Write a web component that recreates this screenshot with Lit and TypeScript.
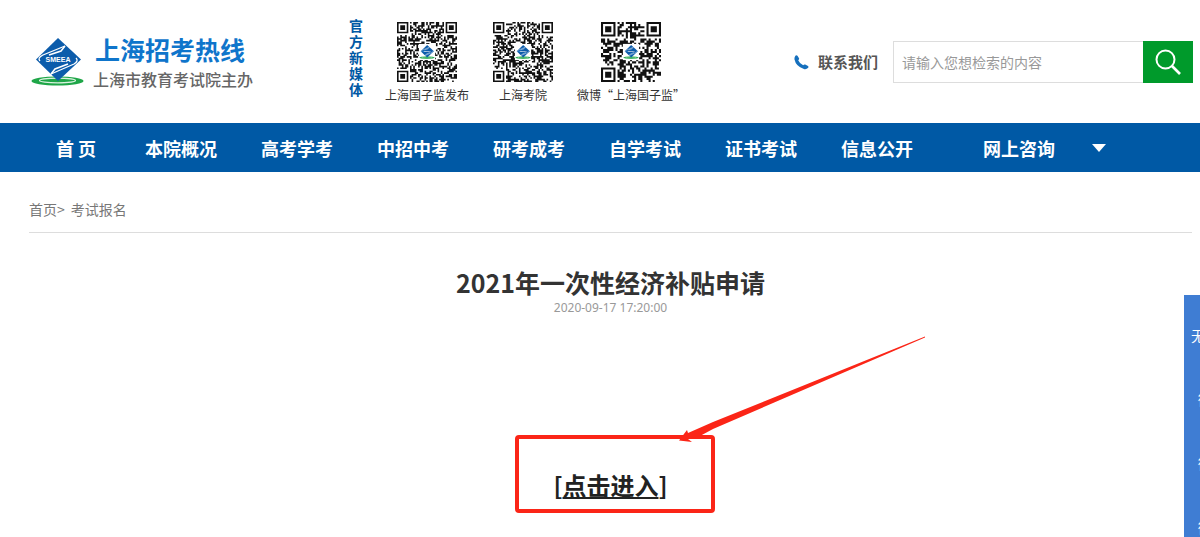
import { LitElement, html, svg, css } from "lit";
import { customElement, property } from "lit/decorators.js";

const emblem = svg`
  <ellipse cx="27.500" cy="43" rx="26" ry="4.500" fill="#1fa648"/>
  <ellipse cx="27.500" cy="42.500" rx="18" ry="2.400" fill="none" stroke="#d9f2de" stroke-width="1.200"/>
  <path d="M28 0 51 21.500 28 43 6 21.500Z" fill="#0c5cab"/>
  <path d="M35 8 13 17q-6 3-3 6M21 36 44 26q5-3 2-6" fill="none" stroke="#fff" stroke-width="1.300"/>
  <path d="M35 8 31 13 19 17M21 36 25 31 38 26" fill="none" stroke="#fff" stroke-width="1.500"/>
  <text x="28" y="24" text-anchor="middle" font-family="Liberation Sans" font-size="7" font-weight="bold" fill="#fff">SMEEA</text>`;

@customElement("qr-card")
class QrCard extends LitElement {
  @property({ type: Number }) modules = 37;
  @property({ type: Number }) seed = 1;
  @property() label = "";

  static styles = css`
    :host { display: flex; flex-direction: column; align-items: center; color: #333;
      font: 12px/18px "Noto Sans CJK SC", sans-serif; white-space: nowrap; }
    .code { width: 60px; height: 60px; margin-bottom: 4px; }
  `;

  private dark(x: number, y: number) {
    let h = Math.imul(x + 1, 374761393) ^ Math.imul(y + 1, 668265263) ^ Math.imul(this.seed, 974634777);
    h = Math.imul(h ^ (h >>> 13), 1274126177);
    h = Math.imul(h ^ (h >>> 15), 2246822519);
    return ((h ^ (h >>> 16)) >>> 0) % 100 < 54;
  }

  private cells() {
    const n = this.modules;
    let d = "";
    const corner = (x: number, y: number) =>
      (x < 8 && y < 8) || (x >= n - 8 && y < 8) || (x < 8 && y >= n - 8);
    for (let y = 0; y < n; y++) {
      for (let x = 0; x < n; x++) {
        if (!corner(x, y) && this.dark(x, y)) d += `M${x} ${y}h1v1h-1z`;
      }
    }
    for (const [x, y] of [[0, 0], [n - 7, 0], [0, n - 7]]) {
      d += `M${x} ${y}h7v7h-7zM${x + 1} ${y + 1}v5h5v-5zM${x + 2} ${y + 2}h3v3h-3z`;
    }
    return d;
  }

  render() {
    const n = this.modules;
    const m = n * 0.27;
    const o = (n - m) / 2;
    return html`
      <svg class="code" viewBox="0 0 ${n} ${n}" role="img" aria-label=${this.label}>
        <path d=${this.cells()} fill="#111"/>
        <rect x=${o} y=${o} width=${m} height=${m} fill="#fff"/>
        <svg x=${o} y=${o} width=${m} height=${m} viewBox="0 0 55 48">${emblem}</svg>
      </svg>
      <span>${this.label}</span>`;
  }
}

@customElement("app-root")
class AppRoot extends LitElement {
  static styles = css`
    :host { display: block; position: relative; min-height: 100vh; overflow: hidden; background: #fff;
      font-family: "Noto Sans CJK SC", sans-serif; color: #333; }
    a { color: inherit; text-decoration: none; }
    .header { display: flex; height: 123px; box-sizing: border-box; padding: 0 7px 0 30px; }
    .brand { display: flex; align-items: flex-start; padding-top: 32px; width: 319px; box-sizing: border-box; }
    .emblem { width: 55px; height: 48px; margin: 6px 8px 0 0; flex: none; }
    .names { display: flex; flex-direction: column; white-space: nowrap; }
    .name { padding-left: 2px; font-size: 25px; line-height: 34px; font-weight: 700; color: #0f75cb; }
    .host { font-size: 16px; line-height: 26px; font-weight: 500; color: #666; }
    .media { display: flex; padding-top: 17px; }
    .media-title { width: 14px; margin-right: 22px; font-size: 14px; line-height: 16px; font-weight: 700; color: #0059a5; }
    .codes { display: flex; padding-top: 5px; gap: 24px; }
    .tools { margin-left: auto; display: flex; align-items: center; height: 42px; padding-top: 41px; }
    .contact { display: flex; align-items: center; gap: 9px; margin-right: 15px; font-size: 15px; line-height: 22px; font-weight: 700; color: #555; }
    .search { display: flex; height: 42px; }
    .search input { box-sizing: border-box; width: 250px; padding: 0 8px; border: 1px solid #ddd; border-right: 0;
      font: 14px/20px "Noto Sans CJK SC", sans-serif; outline: 0; border-radius: 0; }
    .search input::placeholder { color: #999; opacity: 1; }
    .search button { width: 50px; padding: 0; border: 0; background: #009a2b; display: grid; place-items: center; }
    .nav { display: flex; align-items: center; height: 49px; background: #0059a5; color: #fff; padding-left: 29px;
      font-size: 18px; line-height: 26px; font-weight: 700; white-space: nowrap; }
    .nav a { flex: 0 0 116px; text-align: center; }
    .nav a:first-child { flex-basis: 94px; }
    .nav .consult { margin: 0 15px 0 26px; }
    .nav .drop { flex: none; padding: 0; border: 0; background: none; display: flex; }
    .main { padding: 0 8px 0 29px; }
    .crumbs { display: flex; padding: 27px 0 12px; border-bottom: 1px solid #ddd; font-size: 14px; line-height: 21px; color: #777; }
    .crumbs a:last-child { margin-left: 6px; }
    .article { display: flex; flex-direction: column; align-items: center; }
    h1 { margin: 30px 0 0; font-size: 25px; line-height: 38px; font-weight: 700; }
    time { font: 12px/14px "Noto Sans", sans-serif; color: #999; }
    .enter { position: relative; box-sizing: border-box; width: 200px; height: 78px; margin: 120px 0 0 8px; border: 4px solid #fb2517; border-radius: 4px;
      text-align: center; padding: 28px 8px 0 0; font-size: 24px; line-height: 36px; font-weight: 700; color: #222; }
    .enter a { text-decoration: underline; }
    .arrow { position: absolute; left: 159px; top: -104px; width: 250px; height: 110px; }
    .side { position: absolute; top: 295px; right: -40px; width: 56px; bottom: 0; box-sizing: border-box; overflow: hidden; background: #3f7dd3; color: #fff;
      padding-top: 8px; display: flex; flex-direction: column; font-size: 14px; line-height: 64px; text-align: center; white-space: nowrap; }
    .side a { flex: none; }
  `;

  private links = ["首 页", "本院概况", "高考学考", "中招中考", "研考成考", "自学考试", "证书考试", "信息公开"];

  render() {
    return html`
      <header class="header">
        <a class="brand" href="#">
          <svg class="emblem" viewBox="0 0 55 48" aria-hidden="true">${emblem}</svg>
          <span class="names"><span class="name">上海招考热线</span><span class="host">上海市教育考试院主办</span></span>
        </a>
        <div class="media">
          <div class="media-title">官方新媒体</div>
          <div class="codes">
            <qr-card modules="37" seed="3" label="上海国子监发布"></qr-card>
            <qr-card modules="37" seed="8" label="上海考院"></qr-card>
            <qr-card modules="29" seed="5" label="微博“上海国子监”"></qr-card>
          </div>
        </div>
        <div class="tools">
          <a class="contact" href="#">
            <svg width="15" height="15" viewBox="0 0 15 15" aria-hidden="true"><path d="M1 1.500Q2-.5 3.500.8L5 3.200Q5.500 4.300 4.200 5.300q1.500 3.500 5 5 .9-1.200 2-.7l2.800 1.500q1 .8-.1 2-1.500 1.500-4 .9Q2 11.500.5 4.500.3 2.800 1 1.500Z" fill="#1670bd"/></svg>
            <span>联系我们</span>
          </a>
          <form class="search" @submit=${(e: Event) => e.preventDefault()}>
            <input type="text" aria-label="检索" placeholder="请输入您想检索的内容">
            <button aria-label="搜索"><svg width="26" height="26" viewBox="0 0 26 26" fill="none" stroke="#fff" stroke-width="2"><circle cx="10.500" cy="10.500" r="9"/><path d="m17 17 8 8" stroke-width="2.600"/></svg></button>
          </form>
        </div>
      </header>
      <nav class="nav">
        ${this.links.map((t) => html`<a href="#">${t}</a>`)}
        <a class="consult" href="#">网上咨询</a>
        <button class="drop" aria-label="更多"><svg width="14" height="8" viewBox="0 0 14 8"><path d="M0 0h14L7 8Z" fill="#fff"/></svg></button>
      </nav>
      <main class="main">
        <div class="crumbs"><a href="#">首页</a><span>&gt;</span><a href="#">考试报名</a></div>
        <article class="article">
          <h1>2021年一次性经济补贴申请</h1>
          <time>2020-09-17 17:20:00</time>
          <div class="enter">[<a href="#">点击进入</a>]
            <svg class="arrow" viewBox="0 0 250 110" aria-hidden="true"><path d="M247 1.500 247 2.500 35 94 22 101 10 104 14 107 1 105.500 9 95 10 98 35 87Z" fill="#fb2517"/></svg>
          </div>
        </article>
      </main>
      <aside class="side"><a href="#">无障碍</a><a href="#">微信</a><a href="#">微博</a><a href="#">微信</a></aside>`;
  }
}
